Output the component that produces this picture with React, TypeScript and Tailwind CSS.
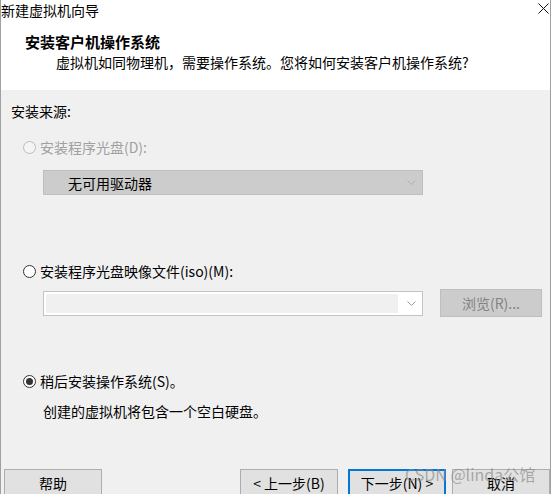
import React from "react";

const font = { fontFamily: '"Noto Sans CJK SC", "Noto Sans", sans-serif' };

function Radio({ checked, disabled }: { checked?: boolean; disabled?: boolean }) {
  return (
    <span
      className={`flex h-[13px] w-[13px] flex-shrink-0 items-center justify-center rounded-full border ${
        disabled ? "border-[#bcbcbc] bg-[#f4f4f4]" : "border-[#333333] bg-white"
      }`}
    >
      {checked && <span className="h-[7px] w-[7px] rounded-full bg-[#333333]" />}
    </span>
  );
}

function Chevron({ color }: { color: string }) {
  return (
    <svg width="9" height="5" viewBox="0 0 9 5" className="flex-shrink-0">
      <path d="M0.5 0.5 L4.5 4.5 L8.5 0.5" fill="none" stroke={color} strokeWidth="1" />
    </svg>
  );
}

function Button({ label, primary }: { label: string; primary?: boolean }) {
  return (
    <div
      className={`flex h-[28px] w-[98px] flex-shrink-0 items-center justify-center bg-[#e1e1e1] text-[14px] leading-[20px] text-black ${
        primary ? "border-2 border-[#0078d7]" : "border border-[#adadad]"
      }`}
    >
      {label}
    </div>
  );
}

export default function App() {
  return (
    <div
      className="relative flex h-[494px] w-[551px] flex-col overflow-hidden border-x border-[#a0a0a0] bg-[#f0f0f0] text-[14px] leading-[20px] text-black"
      style={font}
    >
      {/* title bar + header */}
      <div className="flex flex-col bg-white">
        <div className="flex h-[20px] items-center justify-between pr-[1px]">
          <span className="-mt-[1px]">新建虚拟机向导</span>
          <svg width="11" height="11" viewBox="0 0 11 11" className="-mt-[4px] mr-[0px]">
            <path d="M0.5 0.5 L10.5 10.5 M10.5 0.5 L0.5 10.5" stroke="#111" strokeWidth="1" />
          </svg>
        </div>
        <div className="pl-[24px] pt-[12px] text-[15px] font-bold">安装客户机操作系统</div>
        <div className="pb-[18px] pl-[55px]">
          虚拟机如同物理机，需要操作系统。您将如何安装客户机操作系统?
        </div>
      </div>
      <div className="h-px bg-[#a0a0a0]" />
      <div className="h-px bg-white" />

      {/* body */}
      <div className="flex flex-col pl-[10px] pt-[11px]">
        <div>安装来源:</div>

        <div className="mt-[16px] flex items-center gap-[4px] pl-[12px] text-[#a0a0a0]">
          <Radio disabled />
          <span>安装程序光盘(D):</span>
        </div>
        <div className="ml-[32px] mt-[13px] flex h-[25px] w-[380px] items-center border border-[#bfbfbf] bg-[#cccccc] pl-[24px] pr-[6px]">
          <span className="flex-1">无可用驱动器</span>
          <Chevron color="#b0b0b0" />
        </div>

        <div className="mt-[66px] flex items-center gap-[4px] pl-[12px]">
          <Radio />
          <span>安装程序光盘映像文件(iso)(M):</span>
        </div>
        <div className="ml-[32px] mt-[8px] flex items-center">
          <div className="flex h-[25px] w-[380px] items-center border border-[#c4c4c4] bg-white p-[2px] pr-[6px]">
            <div className="h-full flex-1 bg-[#f0f0f0]" />
            <span className="ml-[9px]">
              <Chevron color="#999999" />
            </span>
          </div>
          <div className="ml-[17px] flex h-[28px] w-[102px] items-center justify-center border border-[#bfbfbf] bg-[#cccccc] text-[#838383]">
            浏览(R)...
          </div>
        </div>

        <div className="mt-[54px] flex items-center gap-[4px] pl-[12px]">
          <Radio checked />
          <span>稍后安装操作系统(S)。</span>
        </div>
        <div className="mt-[10px] pl-[32px]">创建的虚拟机将包含一个空白硬盘。</div>
      </div>

      {/* footer */}
      <div className="mt-[39px] h-px bg-[#a0a0a0]" />
      <div className="h-px bg-white" />
      <div className="mt-[9px] flex pl-[3px]">
        <Button label="帮助" />
        <div className="ml-[138px] flex">
          <Button label="< 上一步(B)" />
        </div>
        <div className="ml-[10px] flex gap-[6px]">
          <Button label="下一步(N) >" primary />
          <Button label="取消" />
        </div>
      </div>

      {/* watermark */}
      <span className="pointer-events-none absolute left-[404px] top-[464px] text-[16px] leading-[20px] text-[#8c8c8c]/70">
        CSDN @linda公馆
      </span>
    </div>
  );
}
